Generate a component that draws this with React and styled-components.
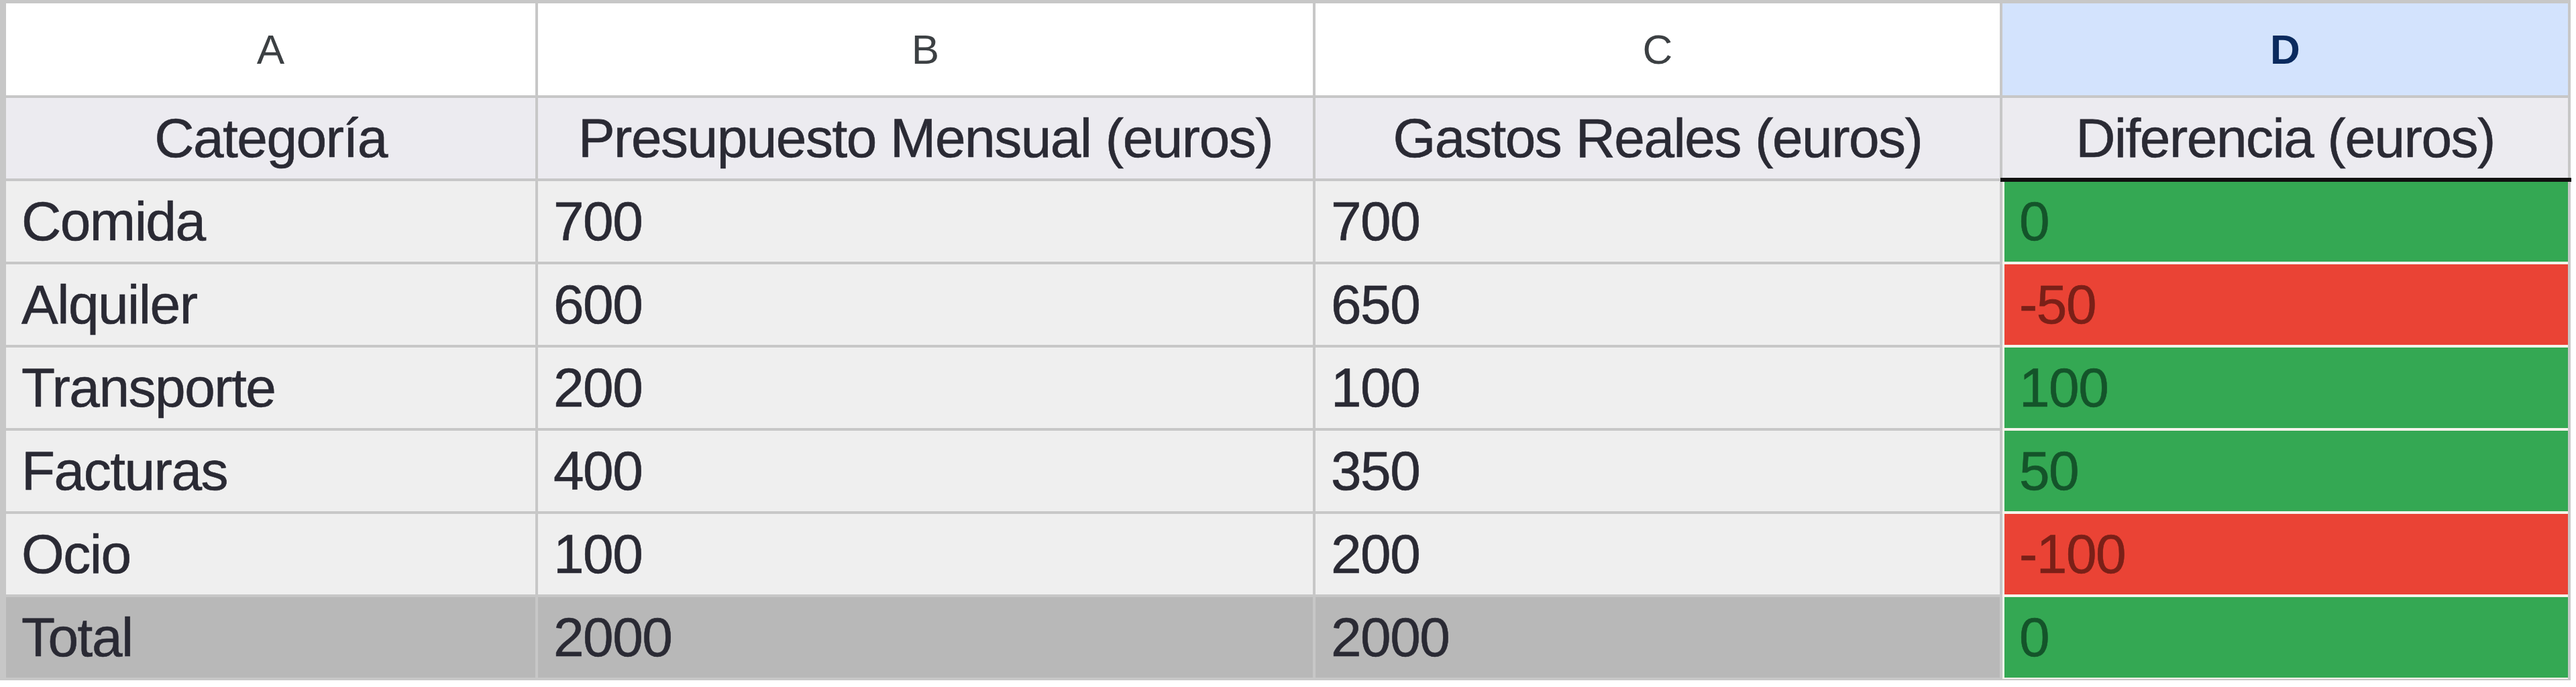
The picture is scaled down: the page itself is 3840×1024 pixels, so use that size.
import React from "react";
import styled, { createGlobalStyle, css } from "styled-components";

const GlobalStyle = createGlobalStyle`
  html, body {
    margin: 0;
    padding: 0;
    background: #ffffff;
  }
  body {
    font-family: "Liberation Sans", Arial, sans-serif;
  }
`;

const Sheet = styled.div`
  display: grid;
  grid-template-columns: 789px 1155px 1020px 843px;
  grid-template-rows: 137px 120px repeat(6, 120px);
  gap: 4px;
  width: 3832px;
  box-sizing: border-box;
  padding: 5px 4px 4px 9px;
  background: #c7c7c7;
  font-family: "Liberation Sans", Arial, sans-serif;
`;

const ColumnHeader = styled.div`
  display: flex;
  align-items: center;
  justify-content: center;
  font-size: 62px;
  color: #3c4043;
  background: #ffffff;
  ${(p) =>
    p.$selected &&
    css`
      background: #d3e3fd;
      color: #0a2a5e;
      font-weight: 700;
    `}
`;

const textLook = css`
  font-size: 82px;
  letter-spacing: -1.5px;
  white-space: nowrap;
  -webkit-text-stroke: 0.6px currentColor;
`;

const TitleCell = styled.div`
  display: flex;
  align-items: center;
  justify-content: center;
  ${textLook};
  color: #2a2a34;
  background: #ecebf0;
  ${(p) =>
    p.$marked &&
    css`
      position: relative;
      &::after {
        content: "";
        position: absolute;
        left: -3px;
        right: -5px;
        bottom: -5px;
        height: 6px;
        background: #111111;
      }
    `}
`;

const Cell = styled.div`
  display: flex;
  align-items: center;
  padding-left: 23px;
  ${textLook};
  color: #2a2a34;
  background: ${(p) => (p.$total ? "#b8b8b8" : "#efefef")};
`;

const DiffCell = styled.div`
  display: flex;
  align-items: center;
  padding-left: 25px;
  ${textLook};
  background: ${(p) => (p.$positive ? "#34a853" : "#ea4335")};
  color: ${(p) => (p.$positive ? "#14542a" : "#7a2018")};
  box-shadow: inset 3px 0 0 #eef5ea, 0 -2px 0 #f7f3ea, 0 2px 0 #f7f3ea;
`;

const columns = ["A", "B", "C", "D"];
const titles = [
  "Categoría",
  "Presupuesto Mensual (euros)",
  "Gastos Reales (euros)",
  "Diferencia (euros)",
];
const rows = [
  ["Comida", 700, 700],
  ["Alquiler", 600, 650],
  ["Transporte", 200, 100],
  ["Facturas", 400, 350],
  ["Ocio", 100, 200],
];

export default function App() {
  const totalBudget = rows.reduce((s, r) => s + r[1], 0);
  const totalSpent = rows.reduce((s, r) => s + r[2], 0);
  return (
    <>
      <GlobalStyle />
      <Sheet>
        {columns.map((c) => (
          <ColumnHeader key={c} $selected={c === "D"}>
            {c}
          </ColumnHeader>
        ))}
        {titles.map((t, i) => (
          <TitleCell key={t} $marked={i === 3}>
            {t}
          </TitleCell>
        ))}
        {rows.map(([name, budget, spent]) => {
          const diff = budget - spent;
          return (
            <React.Fragment key={name}>
              <Cell>{name}</Cell>
              <Cell>{budget}</Cell>
              <Cell>{spent}</Cell>
              <DiffCell $positive={diff >= 0}>{diff}</DiffCell>
            </React.Fragment>
          );
        })}
        <Cell $total>Total</Cell>
        <Cell $total>{totalBudget}</Cell>
        <Cell $total>{totalSpent}</Cell>
        <DiffCell $positive={totalBudget - totalSpent >= 0}>
          {totalBudget - totalSpent}
        </DiffCell>
      </Sheet>
    </>
  );
}
